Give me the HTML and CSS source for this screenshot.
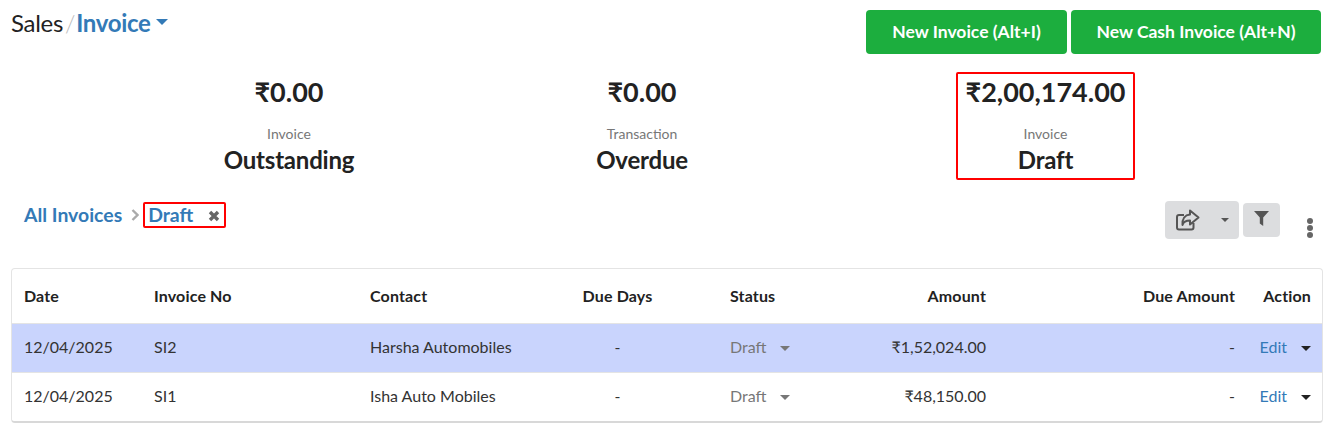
FILE: index.html
```html
<!DOCTYPE html>
<html lang="en">
<head>
  <meta charset="UTF-8">
  <meta name="viewport" content="width=device-width, initial-scale=1.0">
  <title>Sales Invoice</title>
  <link rel="stylesheet" href="styles.css">
</head>
<body>
  <div class="top-bar">
    <div class="page-title">
      <span class="title-root">Sales</span>
      <span class="title-sep">/</span>
      <span class="title-current">Invoice</span>
      <span class="title-caret"></span>
    </div>
    <div class="top-actions">
      <button class="btn-new btn-invoice">New Invoice (Alt+I)</button>
      <button class="btn-new btn-cash">New Cash Invoice (Alt+N)</button>
    </div>
  </div>

  <div class="stats">
    <div class="stat">
      <div class="stat-amount">₹0.00</div>
      <div class="stat-label">Invoice</div>
      <div class="stat-name">Outstanding</div>
    </div>
    <div class="stat">
      <div class="stat-amount">₹0.00</div>
      <div class="stat-label">Transaction</div>
      <div class="stat-name">Overdue</div>
    </div>
    <div class="stat stat-active">
      <div class="stat-amount">₹2,00,174.00</div>
      <div class="stat-label">Invoice</div>
      <div class="stat-name">Draft</div>
    </div>
  </div>

  <div class="filter-bar">
    <div class="crumbs">
      <a class="crumb-all">All Invoices</a>
      <svg class="crumb-arrow" width="8" height="12" viewBox="0 0 8 12"><path d="M1.5 1l5 5-5 5" fill="none" stroke="#aaa" stroke-width="2.400"/></svg>
      <span class="crumb-tag">
        <a class="crumb-draft">Draft</a>
        <svg class="crumb-close" width="12" height="12" viewBox="0 0 12 12"><path d="M2 2l8 8M10 2l-8 8" stroke="#666" stroke-width="3.400"/></svg>
      </span>
    </div>
    <div class="tools">
      <div class="tool-export">
        <svg width="24" height="22" viewBox="0 0 24 22"><path d="M17.500 14v4.500a2 2 0 0 1-2 2H3a2 2 0 0 1-2-2V8a2 2 0 0 1 2-2h5M14 1.500l8.500 7-8.500 7v-4c-4 0-6.500 1-7.500 4.500C6 10 9 6 14 5.500z" fill="none" stroke="#555" stroke-width="2" stroke-linejoin="round"/></svg>
        <span class="tool-caret"></span>
      </div>
      <div class="tool-filter">
        <svg width="15" height="15" viewBox="0 0 15 15"><path d="M0 0h15L9.200 6.500V15L5.800 12.500V6.500z" fill="#555"/></svg>
      </div>
      <div class="tool-more"><i></i><i></i><i></i></div>
    </div>
  </div>

  <div class="table-card">
    <table class="invoice-table">
      <colgroup>
        <col class="col-date"><col class="col-no"><col class="col-contact"><col class="col-days">
        <col class="col-status"><col class="col-amount"><col class="col-due"><col class="col-action">
      </colgroup>
      <thead>
        <tr>
          <th>Date</th>
          <th>Invoice No</th>
          <th>Contact</th>
          <th class="center">Due Days</th>
          <th>Status</th>
          <th class="right">Amount</th>
          <th class="right">Due Amount</th>
          <th class="right">Action</th>
        </tr>
      </thead>
      <tbody>
        <tr class="selected">
          <td>12/04/2025</td>
          <td>SI2</td>
          <td>Harsha Automobiles</td>
          <td class="center">-</td>
          <td><span class="status">Draft<span class="status-caret"></span></span></td>
          <td class="right">₹1,52,024.00</td>
          <td class="right">-</td>
          <td class="right"><a class="edit">Edit</a><span class="action-caret"></span></td>
        </tr>
        <tr>
          <td>12/04/2025</td>
          <td>SI1</td>
          <td>Isha Auto Mobiles</td>
          <td class="center">-</td>
          <td><span class="status">Draft<span class="status-caret"></span></span></td>
          <td class="right">₹48,150.00</td>
          <td class="right">-</td>
          <td class="right"><a class="edit">Edit</a><span class="action-caret"></span></td>
        </tr>
      </tbody>
    </table>
  </div>
</body>
</html>
```

FILE: styles.css
```css
body {
  font-family: 'Lato', sans-serif;
  background-color: #fff;
  color: #222;
  margin: 0;
  padding: 0;
}

.top-bar {
  display: flex;
  justify-content: space-between;
  align-items: flex-start;
  padding: 10px 21px 0 11px;
}

.page-title {
  display: flex;
  align-items: center;
  height: 24px;
  font-size: 24px;
  letter-spacing: -0.3px;
}

.title-root {
  color: #222;
}

.title-sep {
  color: #bbb;
  margin: 0 1px 0 2px;
  font-weight: 300;
}

.title-current {
  color: #337ab7;
  font-weight: 700;
}

.title-caret {
  width: 0;
  height: 0;
  margin: 0 0 0 5px;
  border-left: 6px solid transparent;
  border-right: 6px solid transparent;
  border-top: 6px solid #337ab7;
}

.top-actions {
  display: flex;
  gap: 4px;
}

.btn-new {
  height: 44px;
  border: none;
  border-radius: 4px;
  background-color: #1cae3e;
  color: #fff;
  font-family: inherit;
  font-size: 17.5px;
  font-weight: 700;
  padding: 0 0 2px;
}

.btn-invoice {
  width: 201px;
}

.btn-cash {
  width: 250px;
}

.stats {
  display: grid;
  grid-template-columns: 352px 354px 454px;
  margin: 18px 0 0 113px;
  text-align: center;
}

.stat {
  height: 108px;
  box-sizing: border-box;
  padding-top: 2px;
}

.stat-active {
  justify-self: center;
  width: 179px;
  margin-left: -1px;
  border: 2px solid #f00;
  border-radius: 2px;
  padding-top: 0;
}

.stat-amount {
  font-size: 27px;
  font-weight: 700;
  line-height: 36px;
}

.stat-label {
  margin-top: 14px;
  font-size: 14px;
  line-height: 20px;
  color: #777;
}

.stat-name {
  margin-top: 1px;
  font-size: 24px;
  font-weight: 700;
  line-height: 30px;
  letter-spacing: -0.2px;
}

.filter-bar {
  display: flex;
  justify-content: space-between;
  align-items: flex-start;
  height: 67px;
  margin-top: 21px;
  padding: 0 29px 0 24px;
}

.crumbs {
  display: flex;
  align-items: center;
  height: 26px;
  margin-top: 1px;
  font-size: 19.4px;
  font-weight: 700;
  color: #337ab7;
}

.crumb-all {
  margin-top: -2px;
}

.crumb-arrow {
  margin: 0 4px 0 9px;
}

.crumb-tag {
  display: flex;
  align-items: center;
  justify-content: space-between;
  box-sizing: border-box;
  width: 83px;
  height: 26px;
  padding: 0 4px 0 3px;
  border: 2px solid #f00;
  border-radius: 2px;
}

.crumb-draft {
  margin-top: -2px;
}

.crumb-close {
  margin-top: 1px;
}

.tools {
  display: flex;
  align-items: flex-start;
}

.tool-export {
  display: flex;
  align-items: center;
  gap: 21px;
  box-sizing: border-box;
  width: 74px;
  height: 38px;
  padding-left: 11px;
  background-color: #dcdddf;
  border-radius: 4px;
}

.tool-caret {
  width: 0;
  height: 0;
  border-left: 4px solid transparent;
  border-right: 4px solid transparent;
  border-top: 4px solid #555;
}

.tool-filter {
  display: flex;
  justify-content: center;
  box-sizing: border-box;
  width: 37px;
  height: 34px;
  margin: 2px 0 0 4px;
  padding-top: 8px;
  background-color: #dcdddf;
  border-radius: 4px;
}

.tool-more {
  display: flex;
  flex-direction: column;
  gap: 1px;
  margin: 17px 0 0 27px;
}

.tool-more i {
  display: block;
  width: 6px;
  height: 6px;
  border-radius: 50%;
  background-color: #666;
}

.table-card {
  width: 1312px;
  margin-left: 11px;
  box-sizing: border-box;
  border: 1px solid #e4e4e4;
  border-bottom: 2px solid #d8d8d8;
  border-radius: 4px;
}

.invoice-table {
  width: 100%;
  table-layout: fixed;
  border-collapse: collapse;
  font-size: 16px;
}

.col-date { width: 130px; }
.col-no { width: 216px; }
.col-contact { width: 159px; }
.col-days { width: 201px; }
.col-status { width: 140px; }
.col-amount { width: 140px; }
.col-due { width: 249px; }
.col-action { width: 75px; }

.invoice-table th,
.invoice-table td {
  text-align: left;
  white-space: nowrap;
}

.invoice-table th {
  height: 52px;
  padding: 0 12px 2px;
  font-weight: 700;
  letter-spacing: 0.15px;
  color: #222;
}

.invoice-table td {
  height: 44px;
  padding: 0 12px 4px;
  color: #333;
  border-top: 1px solid #e4e4e4;
}

.invoice-table .center {
  text-align: center;
}

.invoice-table .right {
  text-align: right;
}

.invoice-table th:last-child,
.invoice-table td:last-child {
  padding-right: 11px;
}

.selected td {
  background-color: #c9d4fd;
}

.status {
  color: #777;
}

.status-caret {
  display: inline-block;
  width: 0;
  height: 0;
  margin-left: 14px;
  vertical-align: 2px;
  border-left: 5px solid transparent;
  border-right: 5px solid transparent;
  border-top: 5px solid #777;
}

.edit {
  color: #337ab7;
}

.action-caret {
  display: inline-block;
  width: 0;
  height: 0;
  margin-left: 14px;
  vertical-align: 2px;
  border-left: 5px solid transparent;
  border-right: 5px solid transparent;
  border-top: 5px solid #222;
}
```
